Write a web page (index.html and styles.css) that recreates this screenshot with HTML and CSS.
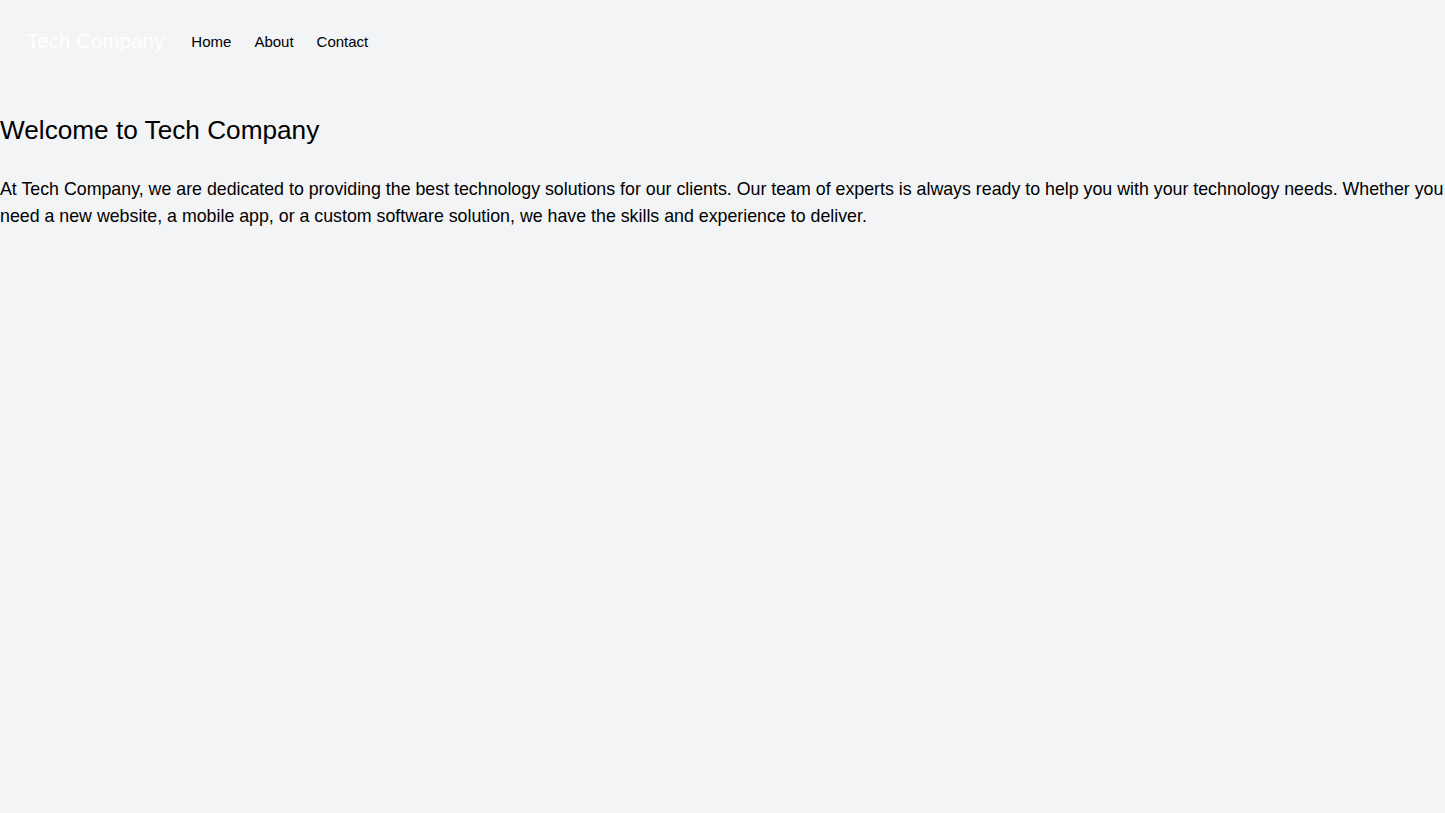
FILE: index.html
```html
<!DOCTYPE html>
<html lang="en">
<head>
  <meta charset="UTF-8">
  <meta name="viewport" content="width=device-width, initial-scale=1.0">
  <title>Tech Company</title>
  <link rel="stylesheet" href="styles.css">
</head>
<body>
  <nav class="topnav">
    <span class="brand">Tech Company</span>
    <a href="#" class="navlink">Home</a>
    <a href="#" class="navlink">About</a>
    <a href="#" class="navlink">Contact</a>
  </nav>
  <main class="content">
    <h1 class="title">Welcome to Tech Company</h1>
    <p class="intro">At Tech Company, we are dedicated to providing the best technology solutions for our clients. Our team of experts is always ready to help you with your technology needs. Whether you need a new website, a mobile app, or a custom software solution, we have the skills and experience to deliver.</p>
  </main>
</body>
</html>
```

FILE: styles.css
```css
/* page */
body {
  margin: 0;
  padding: 0;
  background: #f3f4f6;
  color: #000;
  font-family: "Liberation Sans", Arial, sans-serif;
}
.topnav {
  display: flex;
  align-items: center;
  padding: 27px 27px;
}
.brand {
  color: #fff;
  font-size: 20.6px;
  line-height: 28px;
  margin-right: 27px;
}
.navlink {
  color: #000;
  text-decoration: none;
  font-size: 15px;
  margin-right: 23px;
}
.content {
  padding-top: 32px;
}
.title {
  margin: 0 0 30px;
  font-size: 26.2px;
  font-weight: normal;
  line-height: 32px;
}
.intro {
  margin: 0;
  font-size: 17.8px;
  line-height: 27px;
}
```
